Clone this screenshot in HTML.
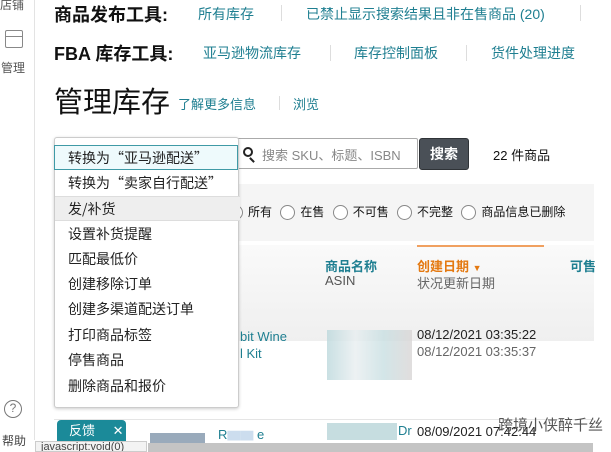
<!DOCTYPE html>
<html><head><meta charset="utf-8"><style>
*{margin:0;padding:0;box-sizing:border-box}
body{width:611px;height:452px;overflow:hidden;background:#fff;font-family:"Liberation Sans","Noto Sans CJK SC",sans-serif;position:relative;color:#111}
.a{position:absolute;white-space:nowrap}
.lk{color:#1f7f91}
.sep{position:absolute;width:1px;background:#ddd}
.dd div{position:absolute;left:0;width:185px;height:25px;padding-left:13px;line-height:25px;font-size:14px;color:#222;font-family:"Noto Sans CJK SC",sans-serif}
.px{position:absolute}
</style></head><body>
<!-- sidebar -->
<div class="a" style="left:0;top:-4px;font-size:12px;color:#555">店铺</div>
<div class="px" style="left:5px;top:30px;width:18px;height:18px;border:1.5px solid #888;border-radius:2px"></div>
<div class="px" style="left:6px;top:36px;width:16px;height:1px;background:#888"></div>
<div class="a" style="left:1px;top:59px;font-size:12px;color:#555">管理</div>
<div class="px" style="left:34px;top:0;width:1px;height:440px;background:#e3e3e3"></div>
<div class="px" style="left:4px;top:400px;width:18px;height:18px;border:1.5px solid #777;border-radius:50%;font-size:12px;color:#777;text-align:center;line-height:15px">?</div>
<div class="a" style="left:2px;top:432px;font-size:12px;color:#444">帮助</div>

<div class="a" style="left:54px;top:1px;font-size:18px;font-weight:bold">商品发布工具:</div>
<div class="a lk" style="left:198px;top:4px;font-size:14px">所有库存</div>
<div class="sep" style="left:281px;top:5px;height:16px"></div>
<div class="a lk" style="left:306px;top:4px;font-size:14px">已禁止显示搜索结果且非在售商品 (20)</div>
<div class="sep" style="left:580px;top:5px;height:16px"></div>
<div class="a" style="left:54px;top:40px;font-size:18px;font-weight:bold">FBA 库存工具:</div>
<div class="a lk" style="left:203px;top:43px;font-size:14px">亚马逊物流库存</div>
<div class="sep" style="left:330px;top:45px;height:16px"></div>
<div class="a lk" style="left:354px;top:43px;font-size:14px">库存控制面板</div>
<div class="sep" style="left:466px;top:45px;height:16px"></div>
<div class="a lk" style="left:491px;top:43px;font-size:14px">货件处理进度</div>
<div class="a" style="left:54px;top:79px;font-size:29px;color:#111">管理库存</div>
<div class="a lk" style="left:178px;top:94px;font-size:13px">了解更多信息</div>
<div class="sep" style="left:279px;top:96px;height:14px"></div>
<div class="a lk" style="left:293px;top:94px;font-size:13px">浏览</div>

<!-- search -->
<div class="px" style="left:235px;top:138px;width:183px;height:31px;border:1px solid #aaa;border-radius:2px"></div>
<div class="px" style="left:243px;top:147px;width:10px;height:10px;border:2px solid #222;border-radius:50%"></div>
<div class="px" style="left:251px;top:157px;width:2px;height:6px;background:#222;transform:rotate(-45deg)"></div>
<div class="a" style="left:262px;top:145px;font-size:13px;color:#888">搜索 SKU、标题、ISBN</div>
<div class="px" style="left:419px;top:138px;width:50px;height:32px;background:#4a5057;border:1px solid #2f3337;border-radius:3px;color:#fff;font-weight:bold;font-size:14px;text-align:center;line-height:30px">搜索</div>
<div class="a" style="left:493px;top:145px;font-size:13px">22 件商品</div>

<!-- filter bar -->
<div class="px" style="left:54px;top:184px;width:540px;height:57px;background:#f5f5f5"></div>
<div class="a" style="left:238px;top:204px;font-size:12px;line-height:16px">
<span style="display:inline-block;width:15px;height:15px;border:1px solid #888;border-radius:50%;vertical-align:middle;margin-left:-10px;margin-right:5px;background:#fff"></span>所有
<span style="display:inline-block;width:15px;height:15px;border:1px solid #888;border-radius:50%;vertical-align:middle;margin:0 5px;background:#fff"></span>在售
<span style="display:inline-block;width:15px;height:15px;border:1px solid #888;border-radius:50%;vertical-align:middle;margin:0 5px;background:#fff"></span>不可售
<span style="display:inline-block;width:15px;height:15px;border:1px solid #888;border-radius:50%;vertical-align:middle;margin:0 5px;background:#fff"></span>不完整
<span style="display:inline-block;width:15px;height:15px;border:1px solid #888;border-radius:50%;vertical-align:middle;margin:0 5px;background:#fff"></span>商品信息已删除</div>

<!-- table header -->
<div class="px" style="left:54px;top:245px;width:540px;height:96px;background:linear-gradient(#fafafa,#efefef)"></div>
<div class="px" style="left:417px;top:245px;width:127px;height:2px;background:#f0a060"></div>
<div class="a" style="left:325px;top:256px;font-size:13px;font-weight:bold;color:#1f7f91">商品名称</div>
<div class="a" style="left:325px;top:273px;font-size:13px;color:#555">ASIN</div>
<div class="a" style="left:417px;top:256px;font-size:13px;font-weight:bold;color:#e47911">创建日期 <span style="font-size:9px">▼</span></div>
<div class="a" style="left:417px;top:273px;font-size:13px;color:#666">状况更新日期</div>
<div class="a" style="left:570px;top:256px;font-size:13px;font-weight:bold;color:#1f7f91">可售</div>

<!-- row 1 -->
<div class="a lk" style="left:240px;top:328px;font-size:13px;line-height:17px">bit Wine<br>l Kit</div>
<div class="px" style="left:327px;top:330px;width:85px;height:50px;background:linear-gradient(90deg,#bcd8dc,#e8eef0,#c8dfe2,#d9d5d5);opacity:.8"></div>
<div class="a" style="left:417px;top:326px;font-size:13px;line-height:17px;color:#222">08/12/2021 03:35:22<br><span style="color:#666">08/12/2021 03:35:37</span></div>
<div class="px" style="left:54px;top:419px;width:540px;height:1px;background:#e5e5e5"></div>
<!-- row 2 -->
<div class="a lk" style="left:218px;top:424px;font-size:13px">R<span style="color:#cde">▆▆</span> e</div>
<div class="px" style="left:327px;top:423px;width:70px;height:17px;background:#c6dde0"></div>
<div class="a lk" style="left:398px;top:423px;font-size:13px">Dr</div>
<div class="a" style="left:417px;top:424px;font-size:13px;color:#222">08/09/2021 07:42:44</div>
<div class="a" style="left:498px;top:414px;font-size:15px;color:#555">跨境小侠醉千丝</div>
<div class="px" style="left:150px;top:433px;width:55px;height:10px;background:#9ab"></div>

<!-- feedback -->
<div class="px" style="left:57px;top:420px;width:69px;height:22px;background:#1b8a99;border-radius:4px 4px 0 0;color:#fff;font-size:13px;line-height:22px;padding-left:12px">反馈 <span style="margin-left:14px">✕</span></div>
<!-- status bar -->
<div class="px" style="left:35px;top:441px;width:112px;height:11px;background:#f3f3f3;border:1px solid #ccc;font-size:11px;color:#444;padding-left:5px;line-height:10px;overflow:hidden">javascript:void(0)</div>
<div class="px" style="left:148px;top:443px;width:445px;height:9px;background:#c4c4c4"></div>

<!-- dropdown -->
<div class="px dd" style="left:54px;top:137px;width:185px;height:271px;background:#fff;border:1px solid #ccc;border-radius:3px;box-shadow:0 1px 3px rgba(0,0,0,.2)">
<div style="top:7px;background:#eefafc;border:1.5px solid #3f9aa6;width:184px;left:-1px">转换为“亚马逊配送”</div>
<div style="top:33px">转换为“卖家自行配送”</div>
<div style="top:58px;background:#eee;border-top:1px solid #ddd;border-bottom:1px solid #ddd">发/补货</div>
<div style="top:84px">设置补货提醒</div>
<div style="top:109px">匹配最低价</div>
<div style="top:134px">创建移除订单</div>
<div style="top:159px">创建多渠道配送订单</div>
<div style="top:185px">打印商品标签</div>
<div style="top:210px">停售商品</div>
<div style="top:236px">删除商品和报价</div>
</div>
</body></html>
